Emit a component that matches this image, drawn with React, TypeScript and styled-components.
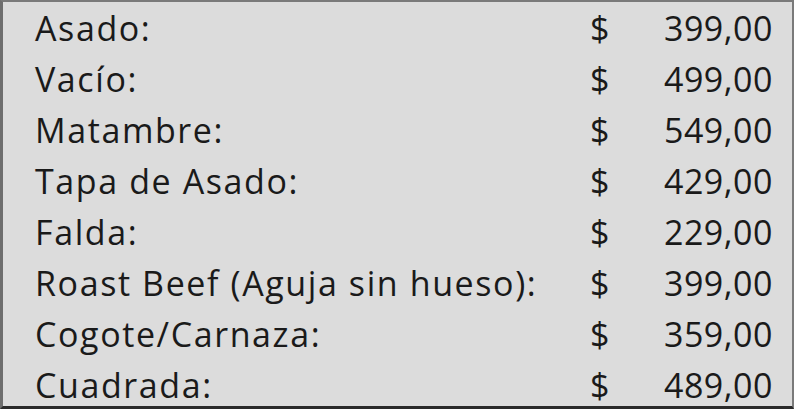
import React from "react";
import styled, { createGlobalStyle } from "styled-components";

const Global = createGlobalStyle`
  html, body {
    margin: 0;
    padding: 0;
    background: #dcdcdc;
  }
`;

const Sheet = styled.div`
  box-sizing: border-box;
  width: 794px;
  height: 409px;
  background: #dcdcdc;
  border-top: 2px solid #7a7a7a;
  border-left: 3px solid #6e6e6e;
  border-right: 2px solid #7a7a7a;
  border-bottom: 3px solid #2a2a2a;
  padding: 1px 19px 0 32px;
  display: flex;
  flex-direction: column;
  font-family: "Open Sans", "Noto Sans", sans-serif;
  color: #1a1a1a;
  overflow: hidden;
`;

const Row = styled.div`
  flex: 0 0 50.9px;
  display: grid;
  grid-template-columns: 555px 1fr auto;
  align-items: center;
  font-size: 34px;
  letter-spacing: 1.6px;
`;

const Label = styled.span`
  white-space: nowrap;
`;

const Currency = styled.span`
  text-align: left;
`;

const Amount = styled.span`
  text-align: right;
  letter-spacing: 0.5px;
`;

type Cut = {
  name: string;
  price: string;
};

const cuts: Cut[] = [
  { name: "Asado:", price: "399,00" },
  { name: "Vacío:", price: "499,00" },
  { name: "Matambre:", price: "549,00" },
  { name: "Tapa de Asado:", price: "429,00" },
  { name: "Falda:", price: "229,00" },
  { name: "Roast Beef (Aguja sin hueso):", price: "399,00" },
  { name: "Cogote/Carnaza:", price: "359,00" },
  { name: "Cuadrada:", price: "489,00" },
];

const App = () => {
  return (
    <>
      <Global />
      <Sheet>
        {cuts.map((cut) => (
          <Row key={cut.name}>
            <Label>{cut.name}</Label>
            <Currency>$</Currency>
            <Amount>{cut.price}</Amount>
          </Row>
        ))}
      </Sheet>
    </>
  );
};

export default App;
